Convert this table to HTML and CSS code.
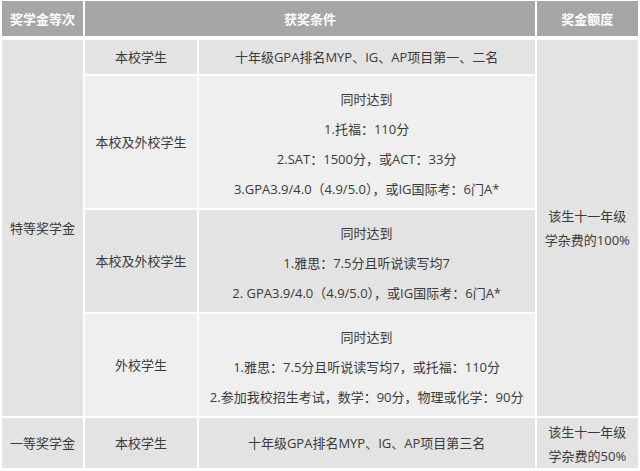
FILE: index.html
```html
<!DOCTYPE html>
<html lang="zh-CN">
<head>
<meta charset="utf-8">
<title>奖学金</title>
<link rel="stylesheet" href="styles.css">
</head>
<body>
<table class="award">
  <colgroup>
    <col class="c1"><col class="c2"><col class="c3"><col class="c4">
  </colgroup>
  <thead>
    <tr>
      <th>奖学金等次</th>
      <th colspan="2">获奖条件</th>
      <th>奖金额度</th>
    </tr>
  </thead>
  <tbody>
    <tr class="dark r-single">
      <td rowspan="4" class="level">特等奖学金</td>
      <td>本校学生</td>
      <td>十年级GPA排名MYP、IG、AP项目第一、二名</td>
      <td rowspan="4" class="amount">该生十一年级<br>学杂费的100%</td>
    </tr>
    <tr class="light">
      <td>本校及外校学生</td>
      <td class="multi">同时达到<br>1.托福：110分<br>2.SAT：1500分，或ACT：33分<br>3.GPA3.9/4.0（4.9/5.0），或IG国际考：6门A*</td>
    </tr>
    <tr class="dark">
      <td>本校及外校学生</td>
      <td class="multi">同时达到<br>1.雅思：7.5分且听说读写均7<br>2. GPA3.9/4.0（4.9/5.0），或IG国际考：6门A*</td>
    </tr>
    <tr class="light">
      <td>外校学生</td>
      <td class="multi">同时达到<br>1.雅思：7.5分且听说读写均7，或托福：110分<br>2.参加我校招生考试，数学：90分，物理或化学：90分</td>
    </tr>
    <tr class="dark r-last">
      <td class="level">一等奖学金</td>
      <td>本校学生</td>
      <td>十年级GPA排名MYP、IG、AP项目第三名</td>
      <td class="amount amount-last">该生十一年级<br>学杂费的50%</td>
    </tr>
  </tbody>
</table>
</body>
</html>
```

FILE: styles.css
```css
html, body {
  margin: 0;
  padding: 0;
  background: #ffffff;
}

body {
  font-family: "Open Sans", "Noto Sans CJK SC", "Microsoft YaHei", sans-serif;
  font-size: 13px;
  color: #3a3a3a;
}

.award {
  border-collapse: separate;
  border-spacing: 2px;
  table-layout: fixed;
  width: 640px;
  margin-top: -1px;
}

.c1 { width: 81px; }
.c2 { width: 111px; }
.c3 { width: 335px; }
.c4 { width: 101px; }

.award th {
  background: #a6a6a6;
  color: #ffffff;
  font-weight: bold;
  height: 35px;
  padding: 0;
  line-height: 20px;
  border-bottom: 2px solid #ffffff;
  background-clip: padding-box;
  text-align: center;
  vertical-align: middle;
}

.award td {
  padding: 0;
  text-align: center;
  vertical-align: middle;
  line-height: 24px;
}

.dark td { background: #e3e3e3; }
.light td { background: #efefef; }

.award td.level,
.award td.amount {
  background: #e3e3e3;
}

.r-single td { height: 34px; }
.r-last td { height: 48px; }

.award td.amount-last {
  height: 46px;
  padding-top: 2px;
}

.award td.multi {
  line-height: 30px;
  padding-top: 8px;
  padding-bottom: 4px;
}
```
